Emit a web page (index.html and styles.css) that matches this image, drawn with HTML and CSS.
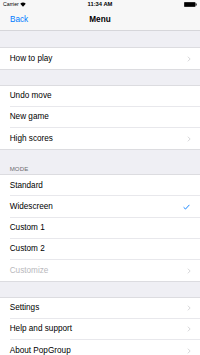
FILE: index.html
```html
<!DOCTYPE html>
<html>
<head>
<meta charset="utf-8">
<link rel="stylesheet" href="styles.css">
</head>
<body>
<div class="screen">
  <div class="status">
    <div class="status-left">
      <span class="carrier">Carrier</span>
      <svg class="wifi" width="6" height="5" viewBox="0 0 12 9"><path d="M6 9 L0.5 3.2 A8 8 0 0 1 11.5 3.2 Z" fill="#000"/></svg>
    </div>
    <div class="time">11:34 AM</div>
    <div class="status-right">
      <svg class="battery" width="13" height="5" viewBox="0 0 26 10"><rect x="0.5" y="0.5" width="22" height="9" rx="1.5" fill="#000" stroke="#000"/><rect x="23.5" y="3" width="1.8" height="4" fill="#000"/></svg>
    </div>
  </div>
  <div class="navbar">
    <span class="back">Back</span>
    <span class="title">Menu</span>
  </div>

  <div class="gap first"></div>
  <div class="group">
    <div class="row"><span class="label">How to play</span><svg class="chev" width="4" height="6" viewBox="0 0 8 13"><path d="M1.5 1.5 L6.5 6.5 L1.5 11.5" fill="none" stroke="#c7c7cc" stroke-width="1.6"/></svg></div>
  </div>

  <div class="gap"></div>
  <div class="group">
    <div class="row"><span class="label">Undo move</span></div>
    <div class="row"><span class="label">New game</span></div>
    <div class="row"><span class="label">High scores</span><svg class="chev" width="4" height="6" viewBox="0 0 8 13"><path d="M1.5 1.5 L6.5 6.5 L1.5 11.5" fill="none" stroke="#c7c7cc" stroke-width="1.6"/></svg></div>
  </div>

  <div class="header">MODE</div>
  <div class="group">
    <div class="row"><span class="label">Standard</span></div>
    <div class="row"><span class="label">Widescreen</span><svg class="check" width="7" height="6" viewBox="0 0 14 11"><path d="M1.2 6 L5 9.6 L12.8 1.2" fill="none" stroke="#007aff" stroke-width="1.8"/></svg></div>
    <div class="row"><span class="label">Custom 1</span></div>
    <div class="row"><span class="label">Custom 2</span></div>
    <div class="row"><span class="label disabled">Customize</span><svg class="chev" width="4" height="6" viewBox="0 0 8 13"><path d="M1.5 1.5 L6.5 6.5 L1.5 11.5" fill="none" stroke="#c7c7cc" stroke-width="1.6"/></svg></div>
  </div>

  <div class="gap"></div>
  <div class="group">
    <div class="row"><span class="label">Settings</span><svg class="chev" width="4" height="6" viewBox="0 0 8 13"><path d="M1.5 1.5 L6.5 6.5 L1.5 11.5" fill="none" stroke="#c7c7cc" stroke-width="1.6"/></svg></div>
    <div class="row"><span class="label">Help and support</span><svg class="chev" width="4" height="6" viewBox="0 0 8 13"><path d="M1.5 1.5 L6.5 6.5 L1.5 11.5" fill="none" stroke="#c7c7cc" stroke-width="1.6"/></svg></div>
    <div class="row"><span class="label">About PopGroup</span><svg class="chev" width="4" height="6" viewBox="0 0 8 13"><path d="M1.5 1.5 L6.5 6.5 L1.5 11.5" fill="none" stroke="#c7c7cc" stroke-width="1.6"/></svg></div>
  </div>
</div>
</body>
</html>
```

FILE: styles.css
```css
html, body {
  margin: 0;
  padding: 0;
  background: #efeff4;
}
body {
  width: 200px;
  height: 355px;
  overflow: hidden;
  font-family: "Liberation Sans", Arial, sans-serif;
  color: #000;
}
.screen {
  display: flex;
  flex-direction: column;
  width: 200px;
}
.status {
  height: 9.7px;
  flex: none;
  background: #f7f7f7;
  display: flex;
  align-items: center;
  justify-content: space-between;
  padding: 0 3px;
  position: relative;
}
.status-left {
  display: flex;
  align-items: center;
  gap: 1.5px;
}
.carrier {
  font-size: 5.2px;
  line-height: 1;
}
.wifi {
  display: block;
}
.time {
  position: absolute;
  left: 0;
  right: 0;
  text-align: center;
  font-size: 5.8px;
  font-weight: bold;
  line-height: 1;
}
.status-right {
  display: flex;
  align-items: center;
}
.battery {
  display: block;
}
.navbar {
  height: 21.3px;
  flex: none;
  background: #f7f7f7;
  border-bottom: 0.5px solid #d6d6da;
  box-sizing: border-box;
  display: flex;
  align-items: center;
  position: relative;
  padding-left: 10px;
}
.back {
  color: #007aff;
  font-size: 8.2px;
}
.title {
  position: absolute;
  left: 0;
  right: 0;
  text-align: center;
  font-size: 8.2px;
  font-weight: bold;
  pointer-events: none;
}
.gap {
  height: 14.5px;
  flex: none;
}
.gap.first {
  height: 16px;
}
.header {
  height: 24px;
  flex: none;
  box-sizing: border-box;
  padding: 15px 0 0 9.7px;
  font-size: 6.1px;
  color: #6d6d72;
  letter-spacing: 0.1px;
}
.group {
  flex: none;
  background: #fff;
  border-top: 0.5px solid #dcdce0;
  border-bottom: 0.5px solid #dcdce0;
}
.row {
  height: 21.2px;
  box-sizing: border-box;
  margin-left: 9.7px;
  padding-right: 9px;
  display: flex;
  align-items: center;
  justify-content: space-between;
  border-bottom: 0.5px solid #e8e8ec;
}
.row:last-child {
  border-bottom: none;
}
.label {
  font-size: 8.2px;
}
.label.disabled {
  color: #b8b8bc;
}
.chev {
  display: block;
}
.check {
  display: block;
  margin-right: 1px;
}
```
